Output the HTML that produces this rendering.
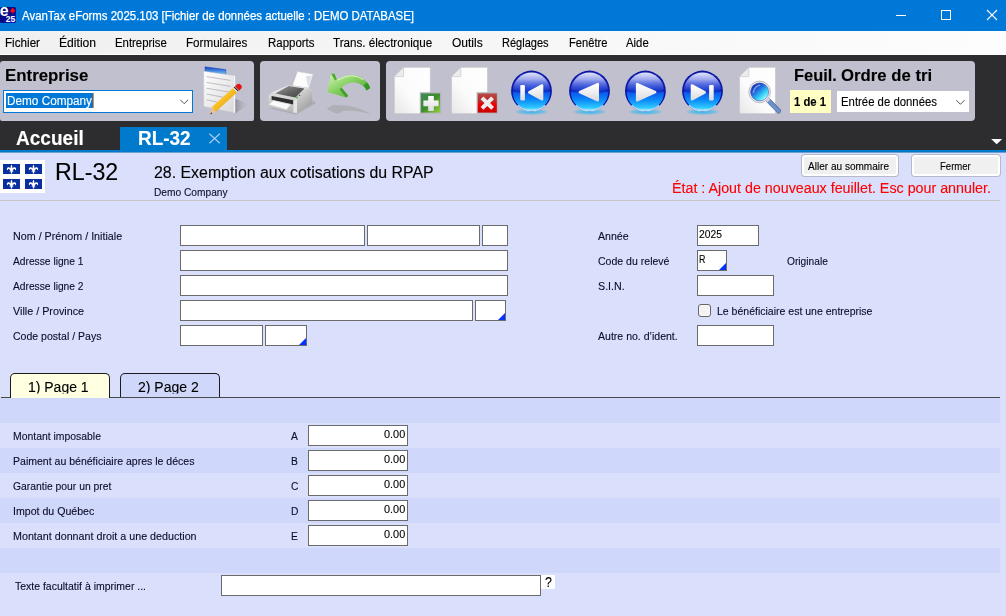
<!DOCTYPE html>
<html lang="fr">
<head>
<meta charset="utf-8">
<title>AvanTax eForms 2025.103</title>
<style>
*{box-sizing:border-box;margin:0;padding:0}
html,body{width:1006px;height:616px;overflow:hidden;background:#dae0fc;font-family:"Liberation Sans",sans-serif}
#app{position:relative;width:1006px;height:616px;overflow:hidden;background:#dae0fc}
.abs,.t,.f,.pn,.st{position:absolute}
.t{-webkit-text-stroke:.12px currentColor;white-space:nowrap;line-height:20px;height:20px;transform-origin:0 50%;z-index:5}
#title{left:0;top:0;width:1006px;height:31px;background:#0078d7}
#menu{left:0;top:31px;width:1006px;height:24px;background:linear-gradient(90deg,#f0f0f0 0,#fdfdfd 100%)}
#tb{left:0;top:55px;width:1006px;height:95px;background:#2d2d30}
.pn{top:61px;height:60px;background:#c0c0cf;border-radius:4px}
#blue{left:0;top:150px;width:1006px;height:3px;background:linear-gradient(#007acc 0,#007acc 2px,#6c9fd6 2px,#6c9fd6 3px)}
#dtab{left:120px;top:127px;width:107px;height:24px;background:#007acc}
.f{background:#fff;border:1px solid #6b6b6b;height:21px}
.tri:after{content:"";position:absolute;right:0;bottom:0;border-style:solid;border-width:0 0 7px 7px;border-color:transparent transparent #0433ff transparent}
.st{left:0;width:1000px;height:25px;background:#cfd7fa}
.btn{position:absolute;top:155px;height:21px;background:#f0f0f0;border:2px solid #fff;border-radius:3px;box-shadow:0 0 0 1px rgba(130,130,132,.42)}
.ptab{position:absolute;top:373px;height:25px;border:1px solid #1c1c1c;border-bottom:none;border-radius:5px 5px 0 0}
</style>
</head>
<body>
<div id="app">
<div id="title" class="abs"></div>
<div id="menu" class="abs"></div>
<div id="tb" class="abs"></div>
<div class="abs" style="left:0;top:54px;width:1006px;height:1px;background:#fff"></div>
<div class="pn" style="left:0;width:254px;border-radius:3px 4px 2px 2px"></div>
<div class="pn" style="left:260px;width:120px"></div>
<div class="pn" style="left:386px;width:589px"></div>
<div id="dtab" class="abs"></div>
<div id="blue" class="abs"></div>

<!-- combos -->
<div class="abs" style="left:3px;top:90px;width:190px;height:23px;background:#fff;border:1px solid #0078d7"></div>
<div class="abs" style="left:6px;top:93px;width:87px;height:15px;background:#0078d7"></div>
<div class="abs" style="left:93px;top:93px;width:1px;height:15px;background:#ff8728"></div>
<div class="abs" style="left:790px;top:90px;width:41px;height:23px;background:#ffffc4"></div>
<div class="abs" style="left:836.5px;top:91px;width:132px;height:21px;background:#fff"></div>

<!-- header -->
<div class="abs" style="left:0;top:160px;width:45px;height:33px;background:#fff"></div>
<div class="abs" style="left:0;top:200px;width:1000px;height:1px;background:#c6c6c8"></div>
<div class="btn" style="left:802px;width:96px"></div>
<div class="btn" style="left:912px;width:88px"></div>

<!-- fields -->
<div class="f" style="left:180px;top:225px;width:185px"></div>
<div class="f" style="left:367px;top:225px;width:113px"></div>
<div class="f" style="left:482px;top:225px;width:26px"></div>
<div class="f" style="left:180px;top:250px;width:328px"></div>
<div class="f" style="left:180px;top:275px;width:328px"></div>
<div class="f" style="left:180px;top:300px;width:293px"></div>
<div class="f tri" style="left:475px;top:300px;width:31px"></div>
<div class="f" style="left:180px;top:325px;width:83px"></div>
<div class="f tri" style="left:265px;top:325px;width:42px"></div>
<div class="f" style="left:697px;top:225px;width:62px"></div>
<div class="f tri" style="left:697px;top:250px;width:30px"></div>
<div class="f" style="left:697px;top:275px;width:77px"></div>
<div class="f" style="left:697px;top:325px;width:77px"></div>
<div class="abs" style="left:698px;top:304px;width:13px;height:13px;background:#f3f3f3;border:1px solid #646464;border-radius:3px;box-shadow:inset 0 0 0 1px #fbfbfb"></div>

<!-- stripes -->
<div class="st" style="top:398px"></div>
<div class="st" style="top:448px"></div>
<div class="st" style="top:498px"></div>
<div class="st" style="top:548px"></div>
<div class="abs" style="left:1px;top:397px;width:999px;height:1px;background:#4a4a4a"></div>
<div class="ptab" style="left:10px;width:100px;background:#ffffe1;height:25px"></div>
<div class="ptab" style="left:120px;width:100px;background:#cfd7fa;height:24px"></div>

<div class="f" style="left:308px;top:425px;width:100px"></div>
<div class="f" style="left:308px;top:450px;width:100px"></div>
<div class="f" style="left:308px;top:475px;width:100px"></div>
<div class="f" style="left:308px;top:500px;width:100px"></div>
<div class="f" style="left:308px;top:525px;width:100px"></div>
<div class="f" style="left:221px;top:575px;width:320px"></div>
<div class="abs" style="left:541px;top:575px;width:14px;height:14px;background:#fff"></div>

<!-- window icon + controls -->
<svg class="abs" style="left:0;top:0" width="1006" height="31" viewBox="0 0 1006 31">
  <defs>
    <clipPath id="aic"><rect x="0" y="7" width="16" height="16" rx="1.5"/></clipPath>
    <linearGradient id="ai" x1="0" y1="0" x2="1" y2="1"><stop offset="0" stop-color="#05056a"/><stop offset=".55" stop-color="#0a0a8c"/><stop offset="1" stop-color="#1420b4"/></linearGradient>
  </defs>
  <rect x="0" y="7" width="16" height="16" rx="1.5" fill="url(#ai)"/>
  <text clip-path="url(#aic)" x="-0.2" y="16" font-family="Liberation Sans, sans-serif" font-weight="700" font-size="15.8" fill="#fff" textLength="8.8" lengthAdjust="spacingAndGlyphs">e</text>
  <text x="5.7" y="22.2" font-family="Liberation Sans, sans-serif" font-weight="700" font-size="9.2" fill="#fff" textLength="9.4" lengthAdjust="spacingAndGlyphs">25</text>
  <path d="M12.7 7.6l.9 1.5.9-.5-.3 1.9 1.3-.7-.5 1.6-1.9 1.1.1 1.200h-1l.1-1.200-1.900-1.100-.5-1.600 1.300.7-.3-1.900.9.500z" fill="#ff0a0a"/>
  <path d="M896 15.5h10" stroke="#fff" stroke-width="1" fill="none"/>
  <rect x="941.5" y="10.5" width="9" height="9" fill="none" stroke="#fff" stroke-width="1"/>
  <path d="M987 10l10 10M997 10l-10 10" stroke="#fff" stroke-width="1.1" fill="none"/>
</svg>

<!-- toolbar icons (page coordinates) -->
<svg class="abs" style="left:0;top:55px" width="1006" height="98" viewBox="0 55 1006 98">
<defs>
  <linearGradient id="gPaper" x1="0" y1="0" x2="1" y2="1"><stop offset="0" stop-color="#ffffff"/><stop offset="1" stop-color="#d9d9dc"/></linearGradient>
  <linearGradient id="gHdr" x1="0" y1="0" x2="0" y2="1"><stop offset="0" stop-color="#1c40c0"/><stop offset=".45" stop-color="#3c7cdc"/><stop offset="1" stop-color="#7cccf6"/></linearGradient>
  <linearGradient id="gPen" x1="0" y1="0" x2="1" y2="1"><stop offset="0" stop-color="#ffe680"/><stop offset=".5" stop-color="#f6bc22"/><stop offset="1" stop-color="#cf8510"/></linearGradient>
  <linearGradient id="gShd" x1="0" y1="0" x2="1" y2="0"><stop offset="0" stop-color="#8a8a94" stop-opacity=".85"/><stop offset="1" stop-color="#b0b0bd" stop-opacity="0"/></linearGradient>
  <linearGradient id="gDoc" x1="1" y1="0" x2="0" y2="1"><stop offset="0" stop-color="#ffffff"/><stop offset=".6" stop-color="#fbfbfb"/><stop offset="1" stop-color="#e6e6e6"/></linearGradient>
  <linearGradient id="gGreen" x1="0" y1="0" x2="1" y2="1"><stop offset="0" stop-color="#3f8a5c"/><stop offset=".5" stop-color="#3d8c2c"/><stop offset="1" stop-color="#94cf3a"/></linearGradient>
  <linearGradient id="gRed" x1="0" y1="0" x2="0" y2="1"><stop offset="0" stop-color="#b84a4a"/><stop offset=".5" stop-color="#be2020"/><stop offset=".52" stop-color="#f40000"/><stop offset="1" stop-color="#c80000"/></linearGradient>
  <linearGradient id="gArrow" x1="0" y1="0" x2="1" y2="1"><stop offset="0" stop-color="#d6f5b8"/><stop offset=".45" stop-color="#86d060"/><stop offset="1" stop-color="#3f9e2c"/></linearGradient>
  <linearGradient id="gArrow2" x1="0" y1="0" x2="0" y2="1"><stop offset="0" stop-color="#c9efa6"/><stop offset="1" stop-color="#4dac36"/></linearGradient>
  <radialGradient id="gBall" cx=".5" cy=".5" r=".5"><stop offset="0" stop-color="#1440d4"/><stop offset=".82" stop-color="#1030c4"/><stop offset=".95" stop-color="#0a18a8"/><stop offset="1" stop-color="#0a1096"/></radialGradient>
  <linearGradient id="gBallTop" x1="0" y1="0" x2="0" y2="1"><stop offset="0" stop-color="#f0f0ff" stop-opacity=".95"/><stop offset=".35" stop-color="#c4c8f8" stop-opacity=".8"/><stop offset=".8" stop-color="#6a7ae8" stop-opacity=".35"/><stop offset="1" stop-color="#3048d8" stop-opacity=".05"/></linearGradient>
  <linearGradient id="gBallBot" x1="0" y1="0" x2="0" y2="1"><stop offset="0" stop-color="#0a58ee" stop-opacity=".9"/><stop offset=".45" stop-color="#0c8cf8"/><stop offset=".85" stop-color="#30c8ff"/><stop offset="1" stop-color="#a0f0ff"/></linearGradient>
  <radialGradient id="gGlow" cx=".5" cy=".5" r=".5"><stop offset="0" stop-color="#28b4f0" stop-opacity=".95"/><stop offset=".7" stop-color="#50b8e8" stop-opacity=".6"/><stop offset="1" stop-color="#80b8d8" stop-opacity="0"/></radialGradient>
  <linearGradient id="gSym" x1="0" y1="0" x2="0" y2="1"><stop offset="0" stop-color="#ffffff"/><stop offset="1" stop-color="#dcdce0"/></linearGradient>
  <linearGradient id="gLens" x1=".15" y1=".1" x2=".85" y2=".9"><stop offset="0" stop-color="#1428b0"/><stop offset=".35" stop-color="#2468dc"/><stop offset=".62" stop-color="#28bcf0"/><stop offset=".85" stop-color="#64ecfc"/><stop offset="1" stop-color="#f4ffff"/></linearGradient>
  <linearGradient id="gHandle" x1="0" y1="1" x2="1" y2="0"><stop offset="0" stop-color="#33589c"/><stop offset=".5" stop-color="#6f94cc"/><stop offset="1" stop-color="#3c62a6"/></linearGradient>
  <linearGradient id="gPrTop" x1="0" y1="0" x2="1" y2="1"><stop offset="0" stop-color="#9c9c9c"/><stop offset=".6" stop-color="#5c5c5c"/><stop offset="1" stop-color="#4a4a4a"/></linearGradient>
  <linearGradient id="gPrBody" x1="0" y1="0" x2="0" y2="1"><stop offset="0" stop-color="#eeeeee"/><stop offset="1" stop-color="#b4b4b4"/></linearGradient>
  <linearGradient id="gPrSide" x1=".2" y1="0" x2=".8" y2="1"><stop offset="0" stop-color="#dedede"/><stop offset=".45" stop-color="#bcbcbc"/><stop offset="1" stop-color="#969696"/></linearGradient>
  <filter id="fBlur" x="-20%" y="-50%" width="140%" height="200%"><feGaussianBlur stdDeviation=".7"/></filter>
  <g id="ball">
    <ellipse cx="0" cy="20.8" rx="18" ry="3.3" fill="url(#gGlow)"/>
    <circle cx="0" cy="0" r="20.4" fill="url(#gBall)"/>
    <path d="M-18.700 .8Q0 3.800 18.700 .8A18.700 18.700 0 0 1 -18.700 .8z" fill="url(#gBallBot)"/>
    <path d="M-18.800 -1.500A18.900 18.900 0 0 1 18.800 -1.500Q0 3 -18.800 -1.500z" fill="url(#gBallTop)"/>
    <path d="M-13.500 14.600A19.800 19.800 0 0 0 13.500 14.600" fill="none" stroke="#e4fbff" stroke-width="1.300" stroke-opacity=".85" stroke-linecap="round"/>
  </g>
  <g id="doc">
    <path d="M9.4 0H36.2V46.6H0V9.4z" fill="url(#gDoc)" stroke="#c4c4c8" stroke-width=".8"/>
    <path d="M9.4 0V9.4H0z" fill="#ececec" stroke="#c2c2c6" stroke-width=".6"/>
  </g>
</defs>

<!-- notepad + pencil -->
<path d="M235 98.500L248.500 104.600L235 113.400z" fill="url(#gShd)"/>
<path d="M205 66.8L225.8 69.6V74.6L205 71.6z" fill="url(#gHdr)" stroke="#2448c0" stroke-width=".5"/>
<path d="M203.8 71.2L233.4 75.500V112.600L203.800 106.400z" fill="url(#gPaper)" stroke="#c8c8cc" stroke-width=".5"/>
<path d="M233.4 75.500L235.200 76V113L233.400 112.600z" fill="#f6f6f6"/>
<g stroke="#9a9aa2" stroke-width=".7" fill="none" opacity=".85">
  <path d="M206.5 76.6L230.500 80.400M206.500 82.400L230.500 86.400M206.500 88.200L229 92M206.500 94L223 97.200M206.500 99.800L217 102"/>
</g>
<path d="M211.800 107L233 88L237.200 92.200L215.800 111.800z" fill="url(#gPen)"/>
<path d="M211.800 107L215.800 111.800L210.200 114.600z" fill="#ecc090"/>
<path d="M211.200 112.200L212.400 113.500L210.200 114.600z" fill="#403020"/>
<path d="M233 88L235 86.200L239.200 90.400L237.200 92.200z" fill="#f4f4f4"/>
<path d="M233.700 87.400L234.600 86.600L238.800 90.800L237.900 91.600z" fill="#2a2a2a"/>
<path d="M235 86.200L236.600 84.700A2.900 2.900 0 0 1 240.800 88.900L239.200 90.400z" fill="#e41414"/>

<!-- printer -->
<path d="M270 108.500L296 114.400L316 103L312 100z" fill="#98989e" opacity=".55" filter="url(#fBlur)"/>
<path d="M296.2 72.4L291 86L293.4 87L298.2 74z" fill="#b8b8bc"/>
<path d="M297.4 71.6L313 74.2L308.6 88L292.4 85.6z" fill="#fdfdfd" stroke="#d0d0d4" stroke-width=".5"/>
<path d="M306 76L311.8 75.4L308 87.4z" fill="#e0e0e4"/>
<path d="M268.4 96.4Q270 93 275 91L288 85.4L306.6 88Q312.6 89.4 312.4 93V104L296 113.6L268.6 107z" fill="url(#gPrBody)"/>
<path d="M295.4 99.4Q299 91.6 306.6 88.4Q312.6 89.4 312.4 93V104L296 113.6z" fill="url(#gPrSide)"/>
<path d="M275.4 93.4L288.6 86L304.6 88.6L295.4 97.6z" fill="url(#gPrTop)"/>
<path d="M271.6 96L293.4 100.2V104.4L271.6 99.8z" fill="#2e2e2e"/>
<path d="M268.6 100L272 99.4L292 103.6L296 101.4V113.6L268.6 107z" fill="#d4d4d4" opacity=".0"/>
<path d="M273.6 100.6L290.6 104.4L286.6 109.8L268.6 104.6z" fill="#fafafa" stroke="#c8c8c8" stroke-width=".4"/>
<path d="M293.400 100.600L297 98.800V113L293.400 112.600z" fill="#e6e6e6"/>
<circle cx="297" cy="97.4" r="1" fill="#3cc83c"/>
<circle cx="299.6" cy="95.4" r=".7" fill="#505050"/>

<!-- green undo arrow -->
<path d="M326.500 109Q334 103 337 105.500Q352 103.500 371 114Q354 109.500 343 111Q340 114.500 335 113z" fill="#a4a4a6" opacity=".6" filter="url(#fBlur)"/>
<path d="M331 73.4L334.6 73.8L336.8 79.6Q352 70.6 364 79.4Q369.4 83.6 370.2 88L366.6 90.6Q362 82.4 352.6 82.6Q346 83 341.6 87.8L348.2 95.8L346.2 97.6L327.4 92z" fill="url(#gArrow)"/>
<path d="M331 73.4L334.6 73.8L336.8 79.6L335 80.6z" fill="#4ea838"/>
<path d="M341.6 87.8L348.2 95.8L346.2 97.6L339.6 89.2z" fill="#3f9e2c"/>
<path d="M366.8 82.4Q369.6 85.2 370.2 88L366.6 90.6Q365.6 87.6 363.4 85.6z" fill="#379428"/>
<path d="M337.4 80.2Q352 71.6 363.4 79.8" fill="none" stroke="#e6fad2" stroke-width="1" opacity=".8"/>

<!-- doc icons -->
<use href="#doc" x="394.2" y="67.2"/>
<rect x="419.8" y="92.2" width="21.4" height="21.6" fill="#b6b6ba"/>
<rect x="421" y="93.4" width="19" height="19.2" fill="url(#gGreen)"/>
<path d="M428.2 96h5.6v4.6h4.8v5.6h-4.8v4.8h-5.6v-4.8h-4.8v-5.6h4.8z" fill="url(#gSym)"/>
<use href="#doc" x="451.4" y="67.2"/>
<rect x="476.6" y="92.2" width="21.4" height="21.6" fill="#b6b6ba"/>
<rect x="477.8" y="93.4" width="19" height="19.2" fill="url(#gRed)"/>
<path d="M483.4 96.4l3.9 3.9 3.9-3.900 2.800 2.800-3.900 3.900 3.900 3.900-2.800 2.800-3.900-3.900-3.900 3.900-2.800-2.800 3.900-3.900-3.900-3.900z" fill="#ececec"/>

<!-- nav balls -->
<use href="#ball" x="531.5" y="91"/>
<use href="#ball" x="589.5" y="91"/>
<use href="#ball" x="645.4" y="91"/>
<use href="#ball" x="702.5" y="91"/>
<g fill="url(#gSym)" stroke="url(#gSym)" stroke-width="2.4" stroke-linejoin="round">
  <rect x="521.2" y="85.9" width="2.8" height="13.7" rx=".2" stroke-width="1.8"/>
  <path d="M529.2 92.4L542.1 85.400V99.400z"/>
  <path d="M579.800 92.200L597.800 84V100.300z"/>
  <path d="M655.200 92.200L637.100 84V100.300z"/>
  <path d="M704.800 92.400L691.900 85.400V99.400z"/>
  <rect x="710" y="85.900" width="2.800" height="13.700" rx=".2" stroke-width="1.8"/>
</g>

<!-- search doc -->
<use href="#doc" x="739.4" y="67.2"/>
<path d="M766.4 101.6L769.6 98.6L780.4 109.6Q781.4 113 778.2 113.6z" fill="url(#gHandle)" stroke="#2c4c8c" stroke-width=".5"/>
<path d="M764.8 99.6L767.6 96.8L770.4 99.4L767.4 102.4z" fill="#d8d8dc" stroke="#8a8a90" stroke-width=".4"/>
<circle cx="759.6" cy="91.9" r="10.8" fill="#f0f0f2" stroke="#a8a8ae" stroke-width=".8"/>
<circle cx="759.6" cy="91.9" r="9" fill="url(#gLens)" stroke="#2030a0" stroke-width=".5"/>
<path d="M753.4 92.4Q754 86.400 759.600 85.200" fill="none" stroke="#b8d8ff" stroke-width="1.6" opacity=".55" stroke-linecap="round"/>

<!-- combo chevrons -->
<path d="M180.300 99.800l3.900 3.900 3.900-3.900" fill="none" stroke="#484848" stroke-width=".95"/>
<path d="M956.300 100.200l4.100 4.100 4.100-4.100" fill="none" stroke="#484848" stroke-width=".95"/>
<!-- tab close + dropdown -->
<path d="M209.400 133.800l10.400 9.400M219.800 133.800l-10.400 9.400" stroke="#a6cbef" stroke-width="1.250" fill="none"/>
<path d="M991.200 139h11l-5.500 5.200z" fill="#fff"/>
</svg>

<!-- Quebec flag logo -->
<svg class="abs" style="left:0;top:160px" width="45" height="33" viewBox="0 160 45 33">
<defs>
  <g id="fl">
    <rect x="0" y="0" width="17" height="10" fill="#0a2f9e"/>
    <path d="M8.500 .6C9.300 2 9.500 3.200 9.300 4.600C9.900 3.400 11.200 2.800 12.400 3.400C13.600 4.200 13.300 6 12 6.200C12.400 5.400 11.800 4.700 11.100 5C10.300 5.400 9.900 6.200 9.500 6.800H10.400V7.600H9.300L9.100 9.600H7.900L7.700 7.600H6.600V6.800H7.500C7.100 6.200 6.700 5.400 5.900 5C5.200 4.700 4.600 5.400 5 6.200C3.700 6 3.400 4.200 4.600 3.400C5.800 2.800 7.100 3.400 7.700 4.600C7.500 3.200 7.700 2 8.500 .6z" fill="#fff"/>
  </g>
</defs>
<use href="#fl" x="3" y="164"/><use href="#fl" x="25" y="164"/><use href="#fl" x="3" y="179"/><use href="#fl" x="25" y="179"/>
</svg>

<span class="t" style="left:22.30px;top:6.00px;font-size:12.00px;font-weight:400;color:#fff;transform:scaleX(0.9526);-webkit-text-stroke:.25px #fff">AvanTax eForms 2025.103 [Fichier de données actuelle : DEMO DATABASE]</span>
<span class="t" style="left:5.30px;top:33.00px;font-size:12.00px;font-weight:400;color:#000;transform:scaleX(0.9720);-webkit-text-stroke:.15px #000">Fichier</span>
<span class="t" style="left:59.40px;top:33.00px;font-size:12.00px;font-weight:400;color:#000;transform:scaleX(1.0106);-webkit-text-stroke:.15px #000">Édition</span>
<span class="t" style="left:114.90px;top:33.00px;font-size:12.00px;font-weight:400;color:#000;transform:scaleX(0.9470);-webkit-text-stroke:.15px #000">Entreprise</span>
<span class="t" style="left:186.40px;top:33.00px;font-size:12.00px;font-weight:400;color:#000;transform:scaleX(0.9693);-webkit-text-stroke:.15px #000">Formulaires</span>
<span class="t" style="left:267.50px;top:33.00px;font-size:12.00px;font-weight:400;color:#000;transform:scaleX(0.9550);-webkit-text-stroke:.15px #000">Rapports</span>
<span class="t" style="left:333.40px;top:33.00px;font-size:12.00px;font-weight:400;color:#000;transform:scaleX(0.9698);-webkit-text-stroke:.15px #000">Trans. électronique</span>
<span class="t" style="left:452.30px;top:33.00px;font-size:12.00px;font-weight:400;color:#000;transform:scaleX(1.0009);-webkit-text-stroke:.15px #000">Outils</span>
<span class="t" style="left:502.40px;top:33.00px;font-size:12.00px;font-weight:400;color:#000;transform:scaleX(0.9191);-webkit-text-stroke:.15px #000">Réglages</span>
<span class="t" style="left:568.50px;top:33.00px;font-size:12.00px;font-weight:400;color:#000;transform:scaleX(0.9285);-webkit-text-stroke:.15px #000">Fenêtre</span>
<span class="t" style="left:626.00px;top:33.00px;font-size:12.00px;font-weight:400;color:#000;transform:scaleX(0.9448);-webkit-text-stroke:.15px #000">Aide</span>
<span class="t" style="left:4.88px;top:66.00px;font-size:16.60px;font-weight:700;color:#000;transform:scaleX(1.0155)">Entreprise</span>
<span class="t" style="left:7.00px;top:91.00px;font-size:12.00px;font-weight:400;color:#fff;transform:scaleX(0.9804)">Demo Company</span>
<span class="t" style="left:793.70px;top:65.00px;font-size:16.40px;font-weight:700;color:#000;transform:scaleX(1.0013)">Feuil.</span>
<span class="t" style="left:840.60px;top:66.00px;font-size:16.60px;font-weight:700;color:#000;transform:scaleX(1.0083)">Ordre de tri</span>
<span class="t" style="left:793.70px;top:92.00px;font-size:12.00px;font-weight:700;color:#000;transform:scaleX(0.9404)">1 de 1</span>
<span class="t" style="left:841.00px;top:92.00px;font-size:12.00px;font-weight:400;color:#000;transform:scaleX(0.9466)">Entrée de données</span>
<span class="t" style="left:16.30px;top:128.00px;font-size:20.00px;font-weight:700;color:#fff;transform:scaleX(0.9520)">Accueil</span>
<span class="t" style="left:137.85px;top:128.00px;font-size:20.00px;font-weight:700;color:#fff;transform:scaleX(0.9478)">RL-32</span>
<span class="t" style="left:55.43px;top:162.00px;font-size:24.00px;font-weight:400;color:#000;transform:scaleX(0.9669)">RL-32</span>
<span class="t" style="left:154.00px;top:163.00px;font-size:16.00px;font-weight:400;color:#000;transform:scaleX(0.9930)">28. Exemption aux cotisations du RPAP</span>
<span class="t" style="left:153.50px;top:182.00px;font-size:11.70px;font-weight:400;color:#0c0c2a;transform:scaleX(0.8712)">Demo Company</span>
<span class="t" style="left:808.30px;top:156.00px;font-size:11.00px;font-weight:400;color:#000;transform:scaleX(0.9139)">Aller au sommaire</span>
<span class="t" style="left:939.70px;top:156.00px;font-size:11.00px;font-weight:400;color:#000;transform:scaleX(0.8692)">Fermer</span>
<span class="t" style="left:671.98px;top:178.00px;font-size:14.00px;font-weight:400;color:#f00;transform:scaleX(1.0194)">État : Ajout de nouveaux feuillet. Esc pour annuler.</span>
<span class="t" style="left:13.40px;top:226.00px;font-size:11.70px;font-weight:400;color:#0c0c2a;transform:scaleX(0.9183)">Nom / Prénom / Initiale</span>
<span class="t" style="left:13.40px;top:251.00px;font-size:11.70px;font-weight:400;color:#0c0c2a;transform:scaleX(0.8756)">Adresse ligne 1</span>
<span class="t" style="left:13.40px;top:276.00px;font-size:11.70px;font-weight:400;color:#0c0c2a;transform:scaleX(0.8756)">Adresse ligne 2</span>
<span class="t" style="left:13.40px;top:301.00px;font-size:11.70px;font-weight:400;color:#0c0c2a;transform:scaleX(0.9218)">Ville / Province</span>
<span class="t" style="left:13.40px;top:326.00px;font-size:11.70px;font-weight:400;color:#0c0c2a;transform:scaleX(0.9017)">Code postal / Pays</span>
<span class="t" style="left:598.00px;top:226.00px;font-size:11.70px;font-weight:400;color:#0c0c2a;transform:scaleX(0.9070)">Année</span>
<span class="t" style="left:598.00px;top:251.00px;font-size:11.70px;font-weight:400;color:#0c0c2a;transform:scaleX(0.9014)">Code du relevé</span>
<span class="t" style="left:598.00px;top:276.00px;font-size:11.70px;font-weight:400;color:#0c0c2a;transform:scaleX(0.9145)">S.I.N.</span>
<span class="t" style="left:598.00px;top:326.00px;font-size:11.70px;font-weight:400;color:#0c0c2a;transform:scaleX(0.9022)">Autre no. d’ident.</span>
<span class="t" style="left:786.60px;top:251.00px;font-size:11.70px;font-weight:400;color:#0c0c2a;transform:scaleX(0.8731)">Originale</span>
<span class="t" style="left:717.30px;top:301.00px;font-size:11.70px;font-weight:400;color:#0c0c2a;transform:scaleX(0.8995)">Le bénéficiaire est une entreprise</span>
<span class="t" style="left:699.30px;top:224.00px;font-size:10.60px;font-weight:400;color:#000;transform:scaleX(0.9715)">2025</span>
<span class="t" style="left:698.80px;top:249.00px;font-size:10.60px;font-weight:400;color:#000;transform:scaleX(0.8375)">R</span>
<span class="t" style="left:28.00px;top:377.00px;font-size:14.00px;font-weight:400;color:#000;transform:scaleX(0.9979);clip-path:inset(0 0 3.5px 0)">1) Page 1</span>
<span class="t" style="left:138.40px;top:377.00px;font-size:14.00px;font-weight:400;color:#000;transform:scaleX(0.9996);clip-path:inset(0 0 3.5px 0)">2) Page 2</span>
<span class="t" style="left:13.40px;top:426.00px;font-size:11.70px;font-weight:400;color:#0c0c2a;transform:scaleX(0.8906)">Montant imposable</span>
<span class="t" style="left:291.00px;top:426.00px;font-size:11.70px;font-weight:400;color:#0c0c2a;transform:scaleX(0.8800)">A</span>
<span class="t" style="left:383.90px;top:424.00px;font-size:11.00px;font-weight:400;color:#000;transform:scaleX(0.9910)">0.00</span>
<span class="t" style="left:13.40px;top:451.00px;font-size:11.70px;font-weight:400;color:#0c0c2a;transform:scaleX(0.9010)">Paiment au bénéficiaire apres le déces</span>
<span class="t" style="left:291.00px;top:451.00px;font-size:11.70px;font-weight:400;color:#0c0c2a;transform:scaleX(0.8800)">B</span>
<span class="t" style="left:383.90px;top:449.00px;font-size:11.00px;font-weight:400;color:#000;transform:scaleX(0.9910)">0.00</span>
<span class="t" style="left:13.40px;top:476.00px;font-size:11.70px;font-weight:400;color:#0c0c2a;transform:scaleX(0.8860)">Garantie pour un pret</span>
<span class="t" style="left:291.00px;top:476.00px;font-size:11.70px;font-weight:400;color:#0c0c2a;transform:scaleX(0.8800)">C</span>
<span class="t" style="left:383.90px;top:474.00px;font-size:11.00px;font-weight:400;color:#000;transform:scaleX(0.9910)">0.00</span>
<span class="t" style="left:13.09px;top:501.00px;font-size:11.70px;font-weight:400;color:#0c0c2a;transform:scaleX(0.9064)">Impot du Québec</span>
<span class="t" style="left:291.00px;top:501.00px;font-size:11.70px;font-weight:400;color:#0c0c2a;transform:scaleX(0.8800)">D</span>
<span class="t" style="left:383.90px;top:499.00px;font-size:11.00px;font-weight:400;color:#000;transform:scaleX(0.9910)">0.00</span>
<span class="t" style="left:13.40px;top:526.00px;font-size:11.70px;font-weight:400;color:#0c0c2a;transform:scaleX(0.9172)">Montant donnant droit a une deduction</span>
<span class="t" style="left:291.00px;top:526.00px;font-size:11.70px;font-weight:400;color:#0c0c2a;transform:scaleX(0.8800)">E</span>
<span class="t" style="left:383.90px;top:524.00px;font-size:11.00px;font-weight:400;color:#000;transform:scaleX(0.9910)">0.00</span>
<span class="t" style="left:14.80px;top:576.00px;font-size:11.70px;font-weight:400;color:#0c0c2a;transform:scaleX(0.8966)">Texte facultatif à imprimer ...</span>
<span class="t" style="left:544.60px;top:572.00px;font-size:14.00px;font-weight:400;color:#000;transform:scaleX(0.8875)">?</span>
</div>
</body>
</html>
